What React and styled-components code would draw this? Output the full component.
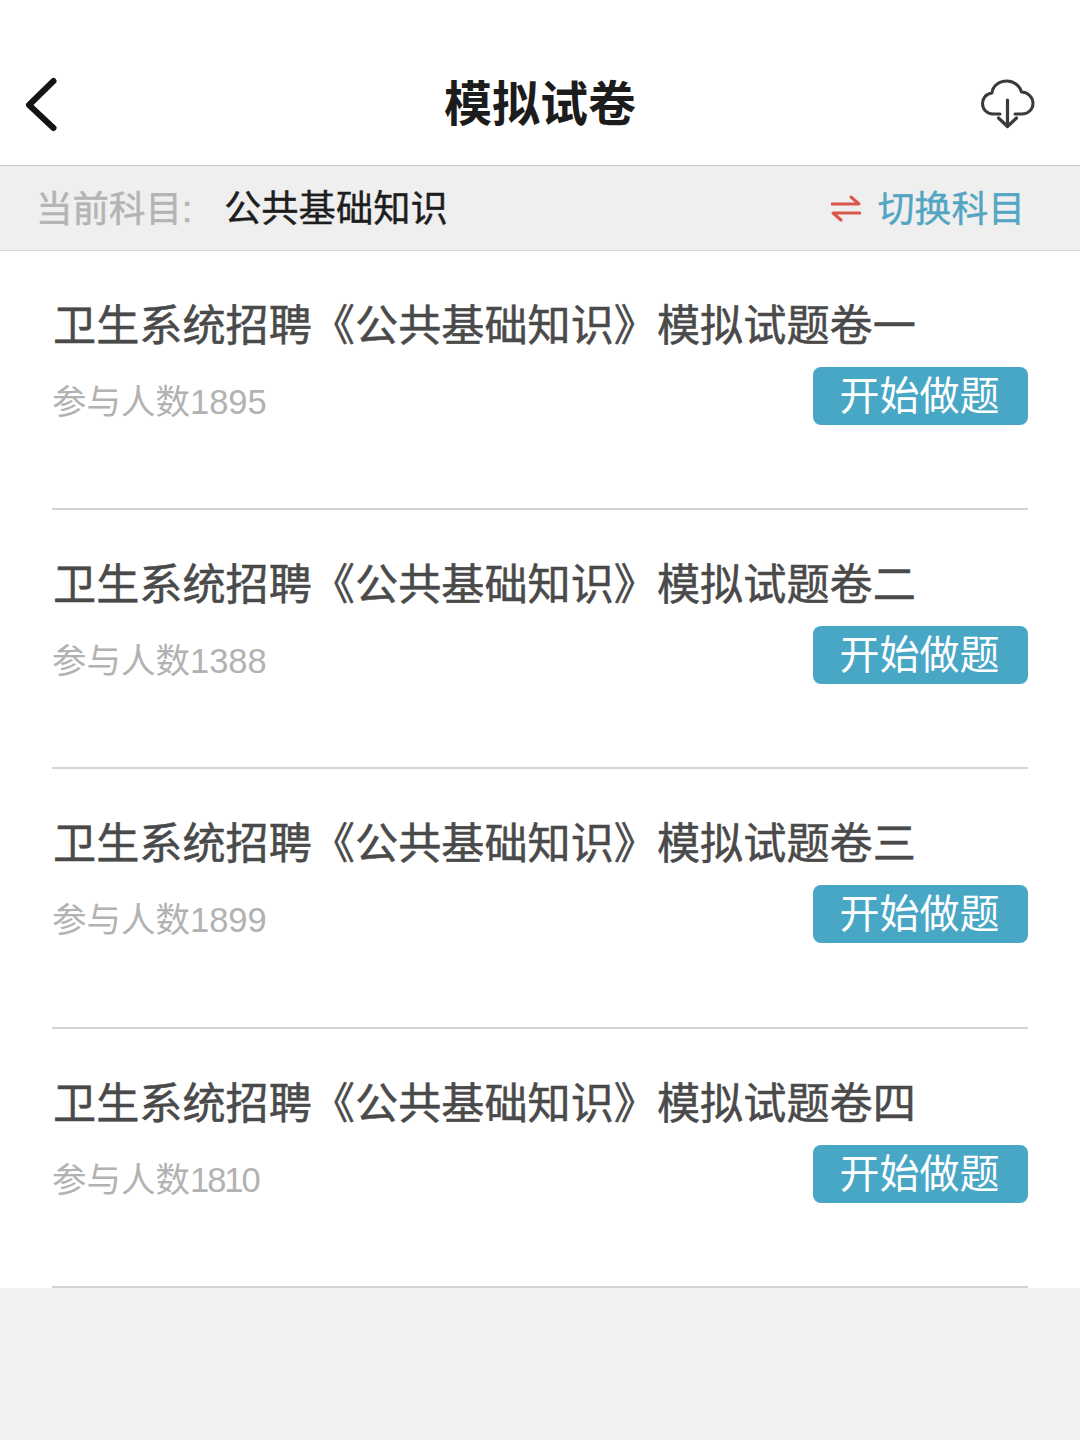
import React from 'react';
import styled, { createGlobalStyle } from 'styled-components';

const Global = createGlobalStyle`
  html, body { margin: 0; padding: 0; background: #fff; }
  * { box-sizing: border-box; }
`;
const cjk = `"Liberation Sans", "Noto Sans CJK SC", sans-serif`;

const Page = styled.div`
  width: 1080px;
  height: 1440px;
  display: flex;
  flex-direction: column;
  font-family: ${cjk};
  background: #f2f2f2;
  overflow: hidden;
`;
const Header = styled.header`
  height: 166px;
  flex: none;
  padding: 72px 44px 0 23px;
  background: #fff;
  border-bottom: 1px solid #c6c6c6;
  display: flex;
  justify-content: space-between;
  align-items: flex-start;
  position: relative;
`;
const BackIcon = styled.svg`
  width: 36px;
  height: 58px;
  margin-top: 3px;
  display: block;
`;
const CloudIcon = styled.svg`
  width: 56px;
  height: 54px;
  margin-top: 6px;
  display: block;
`;
const Title = styled.h1`
  position: absolute;
  left: 0;
  right: 0;
  top: 75px;
  margin: 0;
  text-align: center;
  font-size: 48px;
  line-height: 60px;
  font-weight: 700;
  color: #1c1c1c;
`;
const SubjectBar = styled.div`
  height: 85px;
  flex: none;
  padding: 0 55px 4px 36px;
  background: #efefef;
  border-bottom: 1px solid #d6d6d6;
  display: flex;
  align-items: center;
`;
const SubjectLabel = styled.span`
  font-size: 36.5px;
  color: #b4b4b4;
  width: 188px;
  white-space: nowrap;
  -webkit-text-stroke: 0.5px #b4b4b4;
`;
const SubjectName = styled.span`
  font-size: 37.3px;
  color: #1e1e1e;
  white-space: nowrap;
  -webkit-text-stroke: 0.4px #1e1e1e;
`;
const Switch = styled.div`
  margin-left: auto;
  display: flex;
  align-items: center;
  gap: 17px;
  font-size: 36.8px;
  color: #53a6c2;
  white-space: nowrap;
  -webkit-text-stroke: 0.4px #53a6c2;
`;
const SwapIcon = styled.svg`
  width: 30px;
  height: 28px;
  display: block;
  margin-top: 4px;
`;
const List = styled.main`
  background: #fff;
  padding: 0 52px;
  flex: none;
`;
const Row = styled.article`
  height: 259.2px;
  padding-top: 48px;
  border-bottom: 2px solid #d4d4d4;
`;
const RowTitle = styled.h2`
  margin: 0 0 0 1px;
  font-size: 43.15px;
  line-height: 54px;
  font-weight: 400;
  color: #4a4a4a;
  white-space: nowrap;
  -webkit-text-stroke: 0.5px #4a4a4a;
`;
const RowBody = styled.div`
  margin-top: 14px;
  display: flex;
  justify-content: space-between;
  align-items: flex-start;
`;
const Count = styled.span`
  margin-top: 13px;
  font-size: 34.5px;
  line-height: 44px;
  color: #b2b2b2;
  white-space: nowrap;
`;
const Digits = styled.span`
  letter-spacing: ${(p) => (p.$narrow ? '-2px' : '0')};
`;
const StartButton = styled.button`
  width: 215px;
  height: 58px;
  border: none;
  border-radius: 8px;
  background: #49a7c6;
  color: #fff;
  font-family: inherit;
  font-size: 40px;
  line-height: 58px;
  padding: 0 2px 0 0;
`;

const papers = [
  { name: '一', count: 1895 },
  { name: '二', count: 1388 },
  { name: '三', count: 1899 },
  { name: '四', count: 1810, narrow: true },
];

export default function App() {
  return (
    <Page>
      <Global />
      <Header>
        <BackIcon viewBox="0 0 36 58">
          <path d="M30.500 6 L6 30 L30.500 53" fill="none" stroke="#141414" strokeWidth="6" strokeLinecap="round" strokeLinejoin="round" />
        </BackIcon>
        <Title>模拟试卷</Title>
        <CloudIcon viewBox="0 0 56 54">
          <path d="M20 36 H13 C6.500 36 2.500 31 2.500 25.500 C2.500 20 6.500 15.500 12 15 C12.500 8 19 3 27 3 C33.500 3 39.500 7.500 41.500 14 C48 14 53 19.500 53 25.500 C53 31.500 48 36 42 36 H35" fill="none" stroke="#3a3a3a" strokeWidth="3" strokeLinecap="round" strokeLinejoin="round" />
          <path d="M27.500 22 V47 M18.500 40 L27.500 48.500 L36.500 40" fill="none" stroke="#3a3a3a" strokeWidth="3.200" strokeLinecap="round" strokeLinejoin="round" />
        </CloudIcon>
      </Header>
      <SubjectBar>
        <SubjectLabel>当前科目:</SubjectLabel>
        <SubjectName>公共基础知识</SubjectName>
        <Switch>
          <SwapIcon viewBox="0 0 30 28">
            <path d="M1 10 H28 L20 3" fill="none" stroke="#d9584a" strokeWidth="3" strokeLinecap="round" strokeLinejoin="round" />
            <path d="M29 19 H2 L10 26" fill="none" stroke="#d9584a" strokeWidth="3" strokeLinecap="round" strokeLinejoin="round" />
          </SwapIcon>
          <span>切换科目</span>
        </Switch>
      </SubjectBar>
      <List>
        {papers.map((p) => (
          <Row key={p.name}>
            <RowTitle>卫生系统招聘《公共基础知识》模拟试题卷{p.name}</RowTitle>
            <RowBody>
              <Count>参与人数<Digits $narrow={p.narrow}>{p.count}</Digits></Count>
              <StartButton>开始做题</StartButton>
            </RowBody>
          </Row>
        ))}
      </List>
    </Page>
  );
}
